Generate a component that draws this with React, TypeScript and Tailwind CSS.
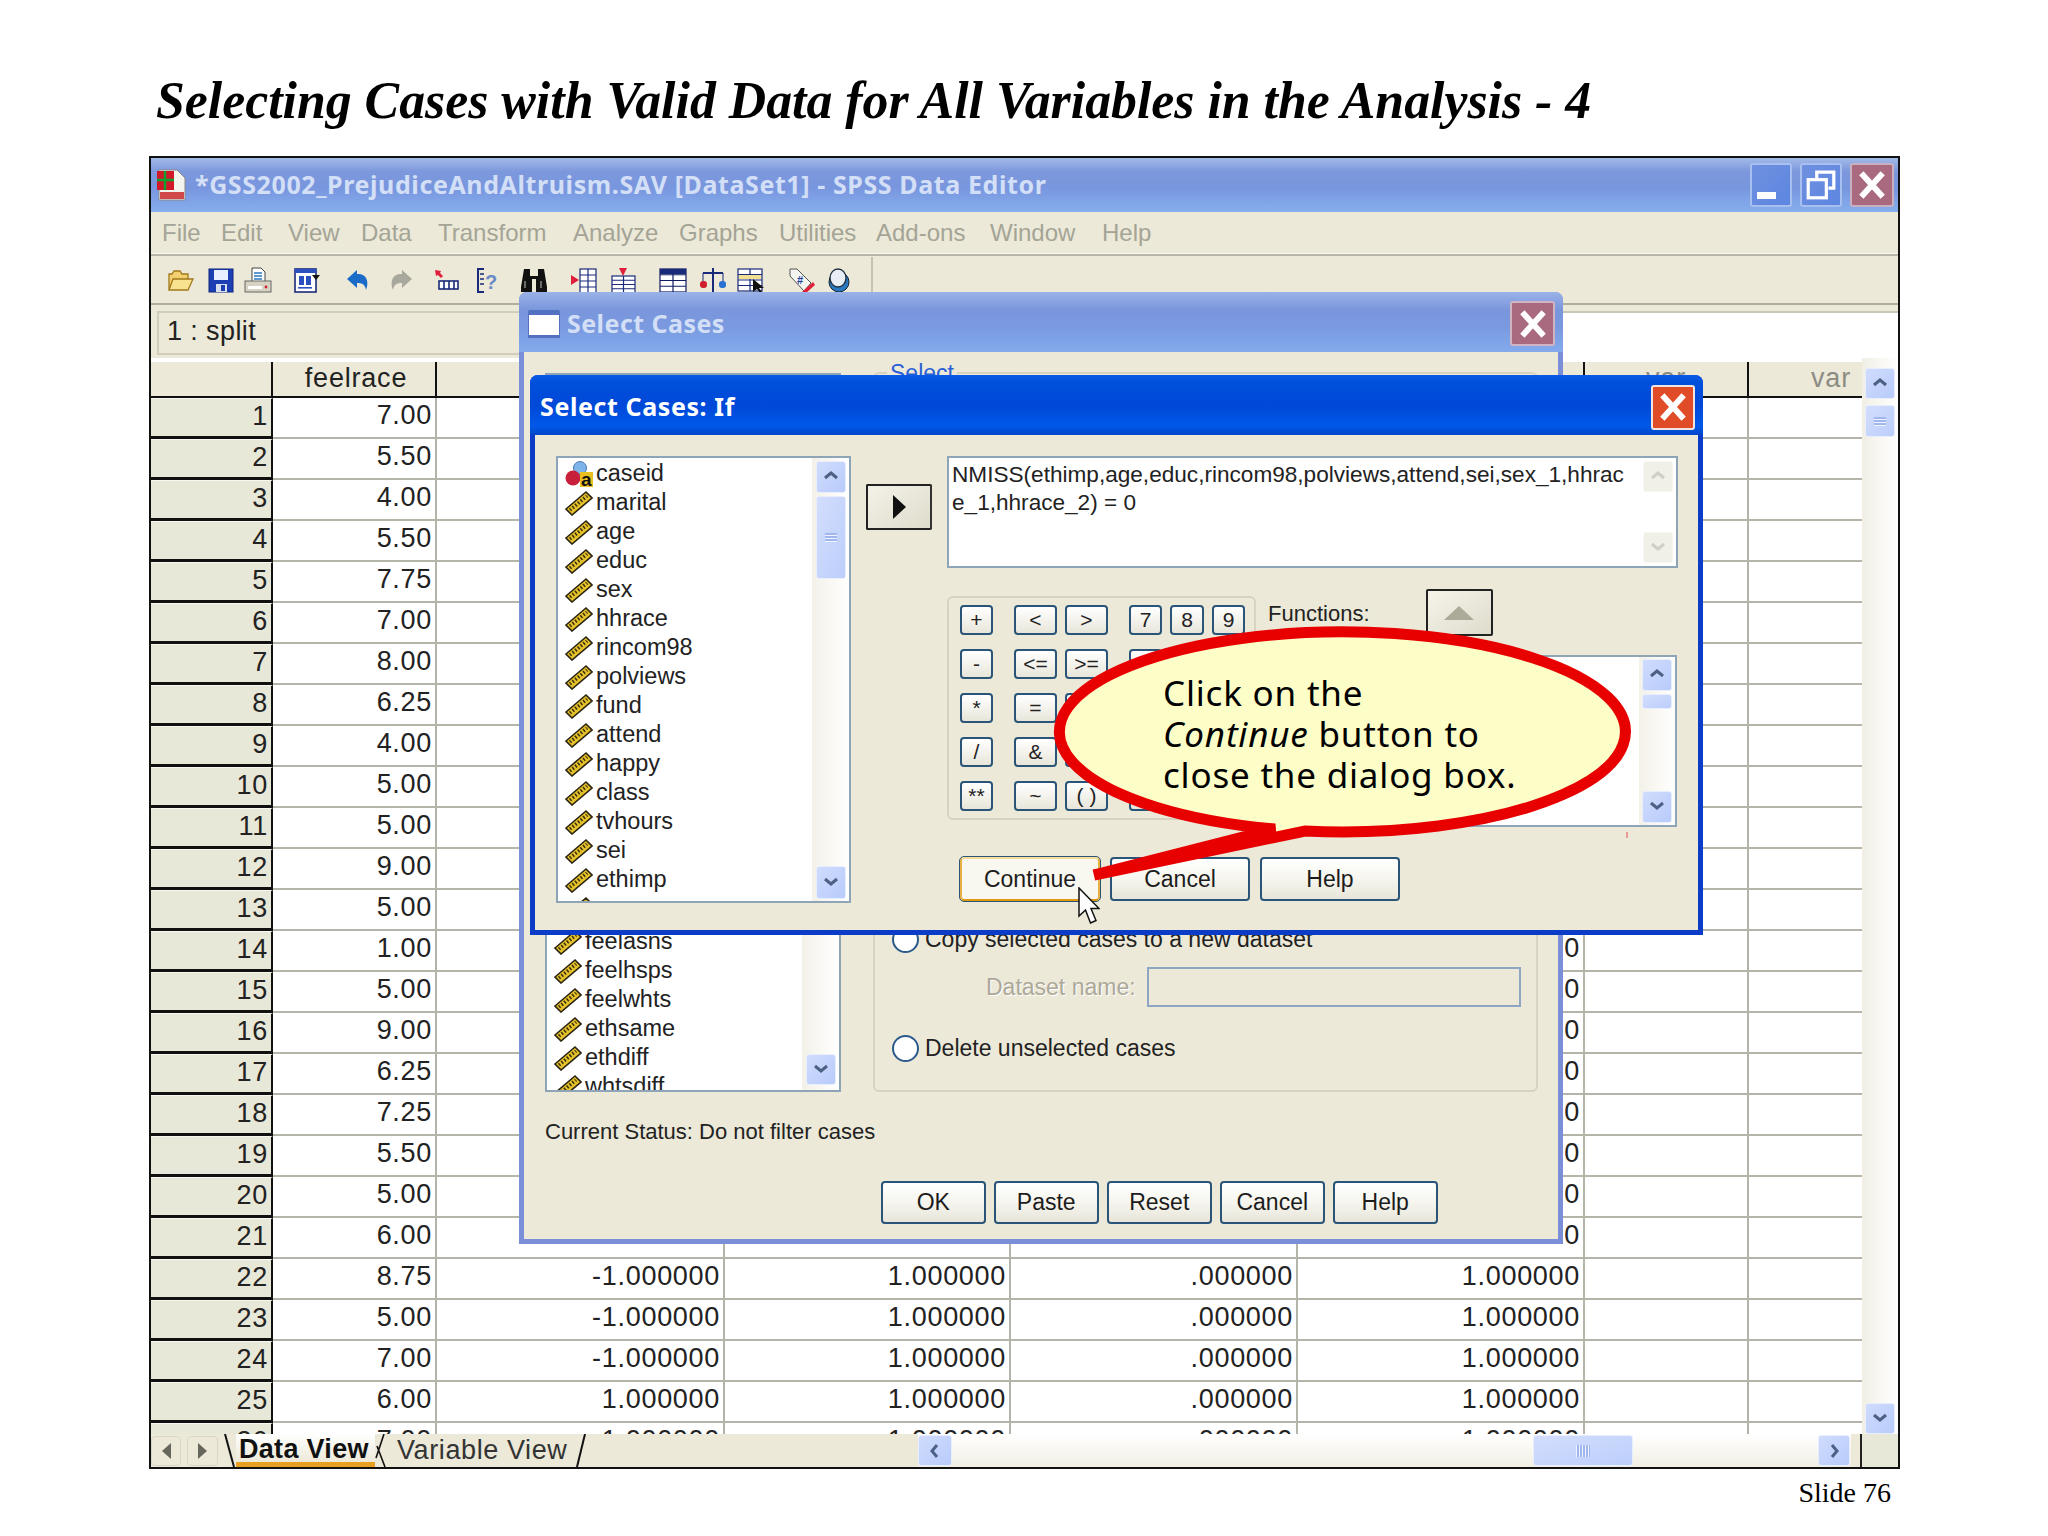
import React from 'react';

const sans = "font-['Liberation_Sans',Arial,sans-serif]";

const colWidths = ['w-[122px]', 'w-[164px]', 'w-[288px]', 'w-[286px]', 'w-[287px]', 'w-[287px]', 'w-[164px]', 'w-[164px]'];

const feelrace = [
  '7.00', '5.50', '4.00', '5.50', '7.75', '7.00', '8.00', '6.25', '4.00', '5.00', '5.00', '9.00', '5.00',
  '1.00', '5.00', '9.00', '6.25', '7.25', '5.50', '5.00', '6.00', '8.75', '5.00', '7.00', '6.00', '7.00',
];

const ifVars = [
  'marital', 'age', 'educ', 'sex', 'hhrace', 'rincom98', 'polviews', 'fund', 'attend', 'happy', 'class', 'tvhours', 'sei', 'ethimp',
];

const selectVars = ['feelasns', 'feelhsps', 'feelwhts', 'ethsame', 'ethdiff', 'whtsdiff'];

const menus = [
  { label: 'File', w: 'w-[59px]' },
  { label: 'Edit', w: 'w-[67px]' },
  { label: 'View', w: 'w-[73px]' },
  { label: 'Data', w: 'w-[77px]' },
  { label: 'Transform', w: 'w-[135px]' },
  { label: 'Analyze', w: 'w-[106px]' },
  { label: 'Graphs', w: 'w-[100px]' },
  { label: 'Utilities', w: 'w-[97px]' },
  { label: 'Add-ons', w: 'w-[114px]' },
  { label: 'Window', w: 'w-[112px]' },
  { label: 'Help', w: 'w-[60px]' },
];

const Ruler = () => (
  <svg viewBox="0 0 28 26" className="w-[28px] h-[26px] shrink-0">
    <polygon points="1,19 21,2 27,8 7,25" fill="#e6c22a" stroke="#2a2410" strokeWidth="1.6" />
    <line x1="5" y1="20" x2="22" y2="6" stroke="#3a3010" strokeWidth="3.5" strokeDasharray="1.5 2" />
  </svg>
);

const NominalIcon = () => (
  <svg viewBox="0 0 28 26" className="w-[28px] h-[26px] shrink-0">
    <circle cx="15" cy="7" r="6.5" fill="#7fb4e8" stroke="#4a7ab8" />
    <circle cx="8" cy="17" r="7.5" fill="#c8203a" />
    <rect x="15" y="11" width="13" height="15" fill="#e8c020" />
    <text x="16" y="24.5" fontSize="19" fontWeight="bold" fill="#111" fontFamily="Liberation Sans">a</text>
  </svg>
);

const Chevron = ({ dir, color = '#4d6185' }: { dir: 'up' | 'down' | 'left' | 'right'; color?: string }) => {
  const d = {
    up: 'M2 9l6-5 6 5',
    down: 'M2 4l6 5 6-5',
    left: 'M10 2L5 8l5 6',
    right: 'M6 2l5 6-5 6',
  }[dir];
  return (
    <svg viewBox="0 0 16 16" className="w-[16px] h-[16px]">
      <path d={d} fill="none" stroke={color} strokeWidth="3" />
    </svg>
  );
};

const ScrollBtn = ({ dir, className = '', disabled = false }: { dir: 'up' | 'down' | 'left' | 'right'; className?: string; disabled?: boolean }) => (
  <div
    className={
      'flex items-center justify-center rounded-[3px] border shrink-0 ' +
      (disabled ? 'bg-[#f1f0e8] border-[#f7f6f0] ' : 'bg-linear-to-br from-[#d0dcfd] to-[#b8cbfb] border-[#e8eefc] ') +
      className
    }
  >
    <Chevron dir={dir} color={disabled ? '#cfcfc6' : '#4d6185'} />
  </div>
);

const Thumb = ({ className = '', wide = false, plain = false }: { className?: string; wide?: boolean; plain?: boolean }) => (
  <div className={'flex items-center justify-center rounded-[3px] border border-[#e8eefc] bg-linear-to-br from-[#d3defd] to-[#bccefb] shrink-0 ' + className}>
    {plain ? null : wide ? (
      <div className="w-[14px] h-[12px] bg-[repeating-linear-gradient(90deg,#eef3ff_0px,#eef3ff_1px,#9fb6ee_1px,#9fb6ee_3px)]" />
    ) : (
      <div className="w-[12px] h-[9px] bg-[repeating-linear-gradient(0deg,#eef3ff_0px,#eef3ff_1px,#9fb6ee_1px,#9fb6ee_3px)]" />
    )}
  </div>
);

const XpButton = ({ label, className = '', focused = false }: { label: string; className?: string; focused?: boolean }) => (
  <div
    className={
      'flex items-center justify-center rounded-[4px] border-2 border-[#2a5578] text-[23px] text-[#1c1c1c] shrink-0 ' +
      (focused
        ? 'border-t-[#f6dc9a] border-b-[#e09a10] border-l-[#e8b040] border-r-[#e8b040] outline outline-[#2a5578] bg-[#f8f7f0] '
        : 'bg-linear-to-b from-white via-[#f6f5ee] to-[#e8e6da] ') +
      className
    }
  >
    {label}
  </div>
);

const PadKey = ({ label, className = '' }: { label: string; className?: string }) => (
  <div className={'flex items-center justify-center h-[30px] rounded-[4px] border-2 border-[#2a5578] bg-linear-to-b from-white to-[#e8e6da] text-[21px] text-[#222] shrink-0 ' + className}>
    {label}
  </div>
);

const CloseBtn = ({ className = '' }: { className?: string }) => (
  <div className={'flex items-center justify-center rounded-[3px] border-2 shrink-0 ' + className}>
    <svg viewBox="0 0 30 30" className="w-[32px] h-[32px]">
      <path d="M5 4L25 26M25 4L5 26" stroke="#fff" strokeWidth="5.5" />
    </svg>
  </div>
);

const Tool = ({ className = '', children }: { className?: string; children: React.ReactNode }) => (
  <svg viewBox="0 0 28 26" className={'w-[28px] h-[26px] shrink-0 ' + className}>
    {children}
  </svg>
);

const Grid3 = ({ x = 8, y = 3, w = 18, h = 21, color = '#1a2a7a' }: { x?: number; y?: number; w?: number; h?: number; color?: string }) => (
  <g stroke={color} fill="none" strokeWidth="1.2">
    <rect x={x} y={y} width={w} height={h} fill="#fff" />
    <path d={`M${x} ${y + h / 4}h${w}M${x} ${y + h / 2}h${w}M${x} ${y + (3 * h) / 4}h${w}M${x + w / 2} ${y}v${h}`} />
  </g>
);

const Toolbar = () => (
  <div className="h-[49px] shrink-0 flex items-center pl-[15px] border-b-2 border-[#b0ae9c]">
    <Tool>
      <path d="M3 22V7h3l2-3h6l2 3h6v5" fill="#f2d070" stroke="#a07818" strokeWidth="1.3" />
      <path d="M3 23l4-11h20l-5 11z" fill="#f8e290" stroke="#a07818" strokeWidth="1.3" />
    </Tool>
    <Tool className="ml-[13px]">
      <rect x="2" y="2" width="24" height="23" fill="#1c40b4" stroke="#0c2480" />
      <rect x="7" y="3" width="14" height="10" fill="#e8f0ff" />
      <rect x="9" y="17" width="11" height="8" fill="#d8e0f0" />
      <rect x="14" y="18" width="4" height="6" fill="#1c40b4" />
    </Tool>
    <Tool className="ml-[9px]">
      <path d="M8 1h9l4 4v10H8z" fill="#fff" stroke="#444" />
      <path d="M10 6h8M10 9h8M10 12h8" stroke="#2a7ac0" strokeWidth="1.6" />
      <rect x="1" y="14" width="26" height="11" fill="#d8d2c2" stroke="#666" />
      <rect x="4" y="19" width="14" height="3" fill="#fff" />
      <circle cx="22" cy="20" r="1.4" fill="#d02030" />
    </Tool>
    <Tool className="ml-[21px]">
      <rect x="2" y="2" width="21" height="23" fill="#fff" stroke="#1a2a7a" strokeWidth="1.6" />
      <rect x="2" y="2" width="21" height="4" fill="#2a50c0" />
      <rect x="6" y="9" width="5" height="9" fill="#2a50c0" />
      <rect x="13" y="9" width="5" height="9" fill="#2a50c0" />
      <rect x="5" y="20" width="14" height="1.6" fill="#2a50c0" />
      <path d="M19 8h8l-4 5z" fill="#111" />
    </Tool>
    <Tool className="ml-[24px]">
      <path d="M12 3L2 12l10 9v-5c5 0 8 1 9 7 4-10-1-17-9-16z" fill="#1a6cc8" />
    </Tool>
    <Tool className="ml-[13px]">
      <path d="M16 3l10 9-10 9v-5c-5 0-8 1-9 7-4-10 1-17 9-16z" fill="#a8a89c" />
    </Tool>
    <Tool className="ml-[18px]">
      <path d="M3 3l6 1-1 2 3 3-2 2-3-3-2 1z" fill="#e0203a" />
      <rect x="7" y="14" width="19" height="8" fill="#fff" stroke="#1a2a7a" strokeWidth="1.6" />
      <path d="M12 14v8M17 14v8M22 14v8" stroke="#1a2a7a" strokeWidth="1.6" />
    </Tool>
    <Tool className="ml-[16px]">
      <path d="M8 2H2v23h6" fill="none" stroke="#1a2a7a" strokeWidth="2" />
      <path d="M4 7h4M4 12h4M4 17h4" stroke="#1a2a7a" strokeWidth="1.4" />
      <text x="9" y="22" fontSize="20" fontWeight="bold" fill="#6a8ac8" fontFamily="Liberation Sans">?</text>
    </Tool>
    <Tool className="ml-[16px]">
      <path d="M4 2h6v7h8V2h6l3 18v5H16V12h-4v13H1v-5z" fill="#111" />
      <path d="M5 14v7M21 14v7" stroke="#888" strokeWidth="1.5" />
    </Tool>
    <Tool className="ml-[22px]">
      <Grid3 x={10} y={2} w={16} h={24} />
      <path d="M1 8l8 5-8 5z" fill="#e0203a" />
    </Tool>
    <Tool className="ml-[11px]">
      <Grid3 x={3} y={9} w={23} h={17} />
      <path d="M10 1h8l-4 8z" fill="#e0203a" />
    </Tool>
    <Tool className="ml-[22px]">
      <Grid3 x={1} y={2} w={26} h={23} color="#101c60" />
      <rect x="1" y="2" width="26" height="5" fill="#1a2a7a" />
    </Tool>
    <Tool className="ml-[12px]">
      <path d="M14 1v24M4 6h20" stroke="#1a2a7a" strokeWidth="2" />
      <path d="M4 6v8M24 6v8" stroke="#1a2a7a" />
      <rect x="1" y="14" width="7" height="7" rx="3" fill="#d02030" />
      <rect x="20" y="14" width="7" height="7" rx="3" fill="#2a70d0" />
    </Tool>
    <Tool className="ml-[10px]">
      <Grid3 x={1} y={2} w={24} h={22} />
      <rect x="2" y="8" width="22" height="4" fill="#f0e090" />
      <path d="M16 12v13l4-3 3 4 2-1-3-4h5z" fill="#111" />
    </Tool>
    <Tool className="ml-[23px]">
      <path d="M2 2h7l14 14-7 8L2 9z" fill="#f4f4f0" stroke="#555" />
      <text x="9" y="17" fontSize="11" fontWeight="bold" fill="#2040a0" fontFamily="Liberation Sans">#</text>
      <path d="M14 25l11-10 2 3-10 9z" fill="#e0203a" />
    </Tool>
    <Tool className="ml-[10px]">
      <circle cx="13" cy="15" r="10" fill="#2a78c0" stroke="#123" />
      <ellipse cx="12" cy="11" rx="8" ry="9" fill="#e8eef4" stroke="#234" strokeWidth="1.4" />
    </Tool>
    <div className="ml-[17px] w-[2px] h-[46px] bg-[#c4c2b0]" />
  </div>
);

const DataGrid = () => (
  <div className="h-[1076px] w-[1711px] shrink-0 overflow-hidden bg-white pt-[4px] flex flex-col">
    <div className="flex h-[36px] shrink-0 bg-[#ece9d8] border-b-2 border-[#111] text-[27px] tracking-[0.8px] text-[#222]">
      <div className={colWidths[0] + ' shrink-0 border-r-2 border-[#111]'} />
      <div className={colWidths[1] + ' shrink-0 border-r-2 border-[#111] flex items-center justify-center pb-[2px] pl-[4px]'}>feelrace</div>
      {colWidths.slice(2, 6).map((w) => (
        <div key={w + 'h'} className={w + ' shrink-0 border-r-2 border-[#111]'} />
      ))}
      <div className={colWidths[6] + ' shrink-0 border-r-2 border-[#111] flex items-center justify-center pb-[2px] text-[#8c8c84]'}>var</div>
      <div className={colWidths[7] + ' shrink-0 flex items-center justify-center pb-[2px] text-[#8c8c84]'}>var</div>
    </div>
    {feelrace.map((v, i) => {
      const row = i + 1;
      const late = row >= 22;
      const c2 = row === 25 || row === 26 ? '1.000000' : '-1.000000';
      return (
        <div key={row} className="flex h-[41px] shrink-0 text-[27px] tracking-[0.7px] text-[#222] leading-[35px]">
          <div className={colWidths[0] + ' shrink-0 bg-[#e8e8d8] border-t border-[#f8f8f0] border-r-2 border-b-[3px] border-r-[#111] border-b-[#111] text-right pr-[3px]'}>{row}</div>
          <div className={colWidths[1] + ' shrink-0 border-r-2 border-b-2 border-[#b4b4a8] text-right pr-[3px]'}>{v}</div>
          <div className={colWidths[2] + ' shrink-0 border-r-2 border-b-2 border-[#b4b4a8] text-right pr-[3px]'}>{late ? c2 : ''}</div>
          <div className={colWidths[3] + ' shrink-0 border-r-2 border-b-2 border-[#b4b4a8] text-right pr-[3px]'}>{late ? '1.000000' : ''}</div>
          <div className={colWidths[4] + ' shrink-0 border-r-2 border-b-2 border-[#b4b4a8] text-right pr-[3px]'}>{late ? '.000000' : ''}</div>
          {/* the upper rows only show their last digit past the dialog */}
          <div className={colWidths[5] + ' shrink-0 border-r-2 border-b-2 border-[#b4b4a8] text-right pr-[3px]'}>{late ? '1.000000' : '0'}</div>
          <div className={colWidths[6] + ' shrink-0 border-r-2 border-b-2 border-[#b4b4a8]'} />
          <div className={colWidths[7] + ' shrink-0 border-b-2 border-[#b4b4a8]'} />
        </div>
      );
    })}
  </div>
);

const BottomBar = () => (
  <div className="h-[33px] shrink-0 flex bg-[#ece9d8]">
    <div className="w-[767px] shrink-0 flex items-center">
      <div className="w-[30px] h-[30px] rounded-[4px] border border-[#d8d6c6] flex items-center justify-center">
        <div className="border-y-[8px] border-y-transparent border-r-[9px] border-r-[#66665c]" />
      </div>
      <div className="ml-[6px] w-[31px] h-[30px] rounded-[4px] border border-[#d8d6c6] flex items-center justify-center">
        <div className="border-y-[8px] border-y-transparent border-l-[9px] border-l-[#66665c]" />
      </div>
      <svg viewBox="0 0 14 33" className="ml-[6px] w-[14px] h-[33px] shrink-0">
        <path d="M1 0l9 33" stroke="#111" strokeWidth="2" />
      </svg>
      <div className="h-[33px] w-[139px] shrink-0 -ml-[2px] pl-[3px] border-b-[5px] border-[#e8a020] text-[27px] tracking-[0.3px] font-bold leading-[31px] text-[#111] bg-linear-to-b from-white to-[#ece9d8]">Data View</div>
      <svg viewBox="0 0 16 33" className="w-[16px] h-[33px] shrink-0">
        <path d="M9 0L1 24M2 12l8 21" stroke="#111" strokeWidth="1.6" fill="none" />
      </svg>
      <div className="ml-[6px] text-[27px] tracking-[0.6px] leading-[33px] text-[#333] shrink-0">Variable View</div>
      <svg viewBox="0 0 12 33" className="ml-[8px] w-[12px] h-[33px] shrink-0">
        <path d="M10 0L2 33" stroke="#111" strokeWidth="2" />
      </svg>
    </div>
    <div className="w-[933px] shrink-0 flex items-center bg-linear-to-b from-white to-[#f1efe4]">
      <ScrollBtn dir="left" className="w-[34px] h-[31px]" />
      <div className="ml-[581px]">
        <Thumb wide className="w-[100px] h-[31px]" />
      </div>
      <ScrollBtn dir="right" className="ml-[185px] w-[32px] h-[31px]" />
    </div>
    <div className="w-[11px] shrink-0 border-r-2 border-[#222] bg-[#ece9d8]" />
    <div className="flex-1 bg-[#e8e8d8]" />
  </div>
);

const MainWindow = () => (
  <div className="ml-[149px] w-[1751px] h-[1313px] border-2 border-[#111] bg-[#ece9d8] flex flex-col">
    <div className="h-[54px] shrink-0 flex items-center bg-[linear-gradient(180deg,#a2bae8_0%,#7d98dc_25%,#7896de_55%,#86aeee_100%)]">
      <svg viewBox="0 0 30 32" className="ml-[5px] w-[30px] h-[32px] shrink-0">
        <path d="M3 1h18l8 8v22H3z" fill="#f4f4ee" stroke="#888" />
        <rect x="1" y="2" width="17" height="19" fill="#d01828" />
        <path d="M9 2v19M1 11h17" stroke="#10a030" strokeWidth="2.5" />
        <rect x="4" y="23" width="24" height="7" fill="#d04848" />
      </svg>
      <div className="ml-[9px] text-[25px] font-bold tracking-[0.6px] text-[#d3dff6] font-['Noto_Sans',sans-serif] whitespace-nowrap">
        *GSS2002_PrejudiceAndAltruism.SAV [DataSet1] - SPSS Data Editor
      </div>
      <div className="ml-auto mr-[4px] flex gap-[8px]">
        <div className="w-[42px] h-[44px] rounded-[3px] border-2 border-[#a8c0f0] bg-linear-to-br from-[#7090e0] to-[#5c86e0] flex items-end pl-[5px] pb-[6px]">
          <div className="w-[19px] h-[7px] bg-white" />
        </div>
        <div className="w-[42px] h-[44px] rounded-[3px] border-2 border-[#a8c0f0] bg-linear-to-br from-[#7090e0] to-[#5c86e0] flex items-center justify-center">
          <svg viewBox="0 0 30 30" className="w-[32px] h-[32px]">
            <path d="M11 9V3h16v15h-5" fill="none" stroke="#fff" strokeWidth="3" />
            <rect x="3" y="10" width="17" height="17" fill="none" stroke="#fff" strokeWidth="3" />
          </svg>
        </div>
        <CloseBtn className="w-[44px] h-[44px] border-[#c8b0c0] bg-[#a96a80]" />
      </div>
    </div>
    <div className="h-[41px] shrink-0 flex items-center pl-[11px] text-[24px] text-[#a4a496]">
      {menus.map((m) => (
        <span key={m.label} className={m.w + ' shrink-0'}>{m.label}</span>
      ))}
    </div>
    <div className="h-[3px] shrink-0 bg-[#b8b6a6] border-t border-[#f8f7f0]" />
    <Toolbar />
    <div className="h-[53px] shrink-0 flex flex-col">
      <div className="h-[6px] shrink-0" />
      <div className="flex-1 flex">
        <div className="ml-[6px] w-[500px] h-[44px] border-2 border-[#cfcdbb] flex items-center pl-[8px] pb-[3px] text-[27px] tracking-[0.4px] text-[#222]">1 : split</div>
        <div className="flex-1 bg-white border-t-2 border-[#c8c6b6]" />
      </div>
    </div>
    <div className="flex">
      <DataGrid />
      <div className="w-[36px] h-[1076px] shrink-0 pt-[10px] flex flex-col items-center bg-linear-to-r from-[#f1efe4] to-white">
        <ScrollBtn dir="up" className="w-[30px] h-[31px]" />
        <Thumb className="mt-[6px] w-[30px] h-[32px]" />
        <ScrollBtn dir="down" className="mt-auto w-[30px] h-[31px]" />
      </div>
    </div>
    <BottomBar />
  </div>
);

const SelectCasesDialog = () => (
  <div className="absolute left-[519px] top-[292px] w-[1044px] h-[952px] rounded-t-[8px] border-x-[5px] border-b-[5px] border-[#7b8ed8] bg-[#ece9d8] flex flex-col">
    <div className="-mx-[5px] h-[60px] shrink-0 rounded-t-[8px] flex items-center pt-[3px] bg-[linear-gradient(180deg,#9ab2e8_0%,#7a96dc_30%,#7a9ae0_60%,#84aaec_100%)]">
      <div className="ml-[9px] w-[32px] h-[28px] rounded-t-[2px] bg-white border-t-[5px] border-x border-b-[3px] border-x-[#5470c0] border-t-[#5470c0] border-b-[#5470c0]" />
      <div className="ml-[7px] text-[25px] font-bold tracking-[0.45px] text-[#d3dff6] font-['Noto_Sans',sans-serif]">Select Cases</div>
      <CloseBtn className="ml-auto mr-[8px] w-[45px] h-[45px] border-[#d0b4c4] bg-[#a96a80]" />
    </div>
    <div className="flex pt-[21px] pl-[21px]">
      <div className="w-[296px] h-[719px] shrink-0 border-2 border-[#8ea5b8] bg-white flex overflow-hidden">
        <div className="flex-1 flex flex-col justify-end pl-[7px] -mb-[11px]">
          {selectVars.map((v) => (
            <div key={v} className="h-[29px] shrink-0 flex items-center gap-[3px] text-[23.5px] text-[#222]">
              <Ruler />
              {v}
            </div>
          ))}
        </div>
        <div className="w-[37px] shrink-0 flex flex-col justify-end items-center pb-[5px] bg-linear-to-r from-[#f3f1e8] to-white">
          <ScrollBtn dir="down" className="w-[30px] h-[31px]" />
        </div>
      </div>
      <div className="relative ml-[32px] w-[665px] h-[720px] shrink-0 -mt-px rounded-[6px] border-2 border-[#d6d3c0] flex flex-col justify-end pb-[28px] pl-[17px] text-[23px] text-[#222]">
        <div className="absolute left-[12px] -top-[14px] px-[3px] text-[23px] leading-[26px] text-[#2a5fd8] bg-[#ece9d8]">Select</div>
        <div className="h-[27px] flex items-center gap-[6px]">
          <div className="w-[27px] h-[27px] rounded-full border-2 border-[#2a5a8c] bg-white shrink-0" />
          Copy selected cases to a new dataset
        </div>
        <div className="mt-[14px] h-[40px] flex items-center gap-[11px] pl-[94px]">
          <span className="text-[#aca899] [text-shadow:1px_1px_0_#fff]">Dataset name:</span>
          <div className="w-[374px] h-[40px] border-2 border-[#8ea5c4]" />
        </div>
        <div className="mt-[27px] h-[28px] flex items-center gap-[6px]">
          <div className="w-[27px] h-[27px] rounded-full border-2 border-[#2a5a8c] bg-white shrink-0" />
          Delete unselected cases
        </div>
      </div>
    </div>
    <div className="ml-[21px] mt-[24px] h-[30px] flex items-center text-[22px] text-[#222]">Current Status: Do not filter cases</div>
    <div className="ml-[357px] mt-[35px] flex gap-[8.5px]">
      {['OK', 'Paste', 'Reset', 'Cancel', 'Help'].map((b) => (
        <XpButton key={b} label={b} className="w-[104.5px] h-[43px]" />
      ))}
    </div>
  </div>
);

const padRows = [
  ['+', '<', '>', '7', '8', '9'],
  ['-', '<=', '>=', '4', '5', '6'],
  ['*', '=', '~=', '1', '2', '3'],
  ['/', '&', '|', '0', '.', ''],
  ['**', '~', '( )', 'Delete', '', ''],
];

const CalcPad = () => (
  <div className="w-[309px] h-[224px] shrink-0 rounded-[6px] border-2 border-[#d6d3c0] pl-[11px] pt-[7px] flex flex-col gap-[14px]">
    {padRows.map((r, i) => (
      <div key={i} className="flex">
        <PadKey label={r[0]} className="w-[33px]" />
        <PadKey label={r[1]} className="ml-[21px] w-[43px]" />
        <PadKey label={r[2]} className="ml-[8px] w-[43px]" />
        {r[3] === 'Delete' ? (
          <PadKey label="Delete" className="ml-[21px] w-[116px]" />
        ) : (
          <>
            <PadKey label={r[3]} className="ml-[21px] w-[33px]" />
            {r[4] && <PadKey label={r[4]} className="ml-[8px] w-[34px]" />}
            {r[5] && <PadKey label={r[5]} className="ml-[8px] w-[33px]" />}
          </>
        )}
      </div>
    ))}
  </div>
);

const IfDialog = () => (
  <div className="absolute left-[530px] top-[375px] w-[1173px] h-[560px] rounded-t-[8px] border-x-[5px] border-b-[5px] border-[#0a3cc8] bg-[#ece9d8] flex flex-col">
    <div className="-mx-[5px] h-[60px] shrink-0 rounded-t-[8px] flex items-center pt-[4px] bg-[linear-gradient(180deg,#0a5ae8_0%,#0050dc_12%,#0048d8_50%,#0058e8_85%,#0046c8_100%)]">
      <div className="ml-[10px] text-[25px] font-bold tracking-[0.6px] text-white font-['Noto_Sans',sans-serif]">Select Cases: If</div>
      <CloseBtn className="ml-auto mr-[8px] w-[44px] h-[45px] border-[#f0e4e0] bg-[#e04c28]" />
    </div>
    <div className="flex pl-[21px] pt-[21px]">
      <div className="w-[295px] h-[447px] shrink-0 border-2 border-[#8ea5b8] bg-white flex overflow-hidden">
        <div className="flex-1 pl-[7px] pt-[1px] flex flex-col">
          <div className="h-[29px] shrink-0 flex items-center gap-[3px] text-[23.5px] text-[#222]">
            <NominalIcon />
            caseid
          </div>
          {ifVars.map((v) => (
            <div key={v} className="h-[29px] shrink-0 flex items-center gap-[3px] text-[23.5px] text-[#222]">
              <Ruler />
              {v}
            </div>
          ))}
          <div className="h-[29px] shrink-0 flex items-center">
            <Ruler />
          </div>
        </div>
        <div className="w-[37px] shrink-0 flex flex-col items-center pt-[3px] pb-[2px] bg-linear-to-r from-[#f3f1e8] to-white">
          <ScrollBtn dir="up" className="w-[30px] h-[32px]" />
          <Thumb className="mt-[3px] w-[30px] h-[83px]" />
          <ScrollBtn dir="down" className="mt-auto w-[30px] h-[33px]" />
        </div>
      </div>
      <div className="ml-[15px] mt-[28px] w-[66px] h-[46px] shrink-0 rounded-[2px] border-2 border-[#222] border-r-[#333] bg-linear-to-br from-[#f4f2e8] to-[#dedccc] flex items-center justify-center">
        <div className="border-y-[12px] border-y-transparent border-l-[13px] border-l-[#111]" />
      </div>
      <div className="ml-[15px] w-[731px] shrink-0 flex flex-col">
        <div className="h-[112px] shrink-0 border-2 border-[#8ea5b8] bg-white flex">
          <div className="flex-1 pl-[3px] pt-[3px] text-[22.6px] leading-[28px] text-[#222] break-all">
            NMISS(ethimp,age,educ,rincom98,polviews,attend,sei,sex_1,hhrac
            <br />
            e_1,hhrace_2) = 0
          </div>
          <div className="w-[36px] shrink-0 flex flex-col items-center py-[3px]">
            <ScrollBtn dir="up" disabled className="w-[30px] h-[31px]" />
            <ScrollBtn dir="down" disabled className="mt-auto w-[30px] h-[31px]" />
          </div>
        </div>
        <div className="mt-[28px] flex">
          <CalcPad />
          <div className="ml-[10px] -mt-[7px] w-[411px] shrink-0 flex flex-col">
            <div className="h-[47px] flex items-start">
              <div className="ml-[2px] mt-[8px] text-[22px] text-[#222]">Functions:</div>
              <div className="ml-[56px] w-[67px] h-[47px] rounded-[2px] border-2 border-[#222] bg-linear-to-br from-[#f6f4ea] to-[#dedccc] flex items-center justify-center">
                <div className="border-x-[15px] border-x-transparent border-b-[14px] border-b-[#acaa98]" />
              </div>
            </div>
            <div className="mt-[19px] ml-[2px] h-[172px] border-2 border-[#8ea5b8] bg-white flex justify-end">
              <div className="w-[36px] shrink-0 flex flex-col items-center py-[2px] bg-linear-to-r from-[#f3f1e8] to-white">
                <ScrollBtn dir="up" className="w-[30px] h-[32px]" />
                <Thumb plain className="mt-[3px] w-[30px] h-[15px]" />
                <ScrollBtn dir="down" className="mt-auto w-[30px] h-[32px]" />
              </div>
            </div>
          </div>
        </div>
        <div className="mt-[30px] ml-[13px] flex gap-[10px]">
          <XpButton label="Continue" focused className="w-[140px] h-[44px]" />
          <XpButton label="Cancel" className="w-[140px] h-[44px]" />
          <XpButton label="Help" className="w-[140px] h-[44px]" />
        </div>
      </div>
    </div>
  </div>
);

const Balloon = () => (
  <>
    <svg viewBox="1040 615 610 270" className="absolute left-[1040px] top-[615px] w-[610px] h-[270px]">
      <path
        d="M1275 829L1094 875L1305 831A283 100 0 1 0 1275 829Z"
        fill="#fdfdc8"
        stroke="#e80000"
        strokeWidth="11"
        strokeLinejoin="miter"
      />
      <line x1="1627" y1="832" x2="1627" y2="838" stroke="#e88080" strokeWidth="1.5" />
    </svg>
    <div className="absolute left-[1163px] top-[672px] text-[35px] tracking-[0.8px] leading-[41px] text-black font-['Noto_Sans',sans-serif] whitespace-nowrap">
      Click on the
      <br />
      <i>Continue</i> button to
      <br />
      close the dialog box.
    </div>
    <svg viewBox="0 0 22 37" className="absolute left-[1078px] top-[887px] w-[22px] h-[37px]">
      <path d="M1 1V29L7.5 23L12.5 36L18 33.5L13 21.5H21Z" fill="#fff" stroke="#111" strokeWidth="1.5" />
    </svg>
  </>
);

export default function App() {
  return (
    <div className={'relative w-[2048px] h-[1536px] overflow-hidden bg-white ' + sans}>
      <div className="h-[156px] pl-[156px] pt-[66px] font-['Liberation_Serif',serif] font-bold italic text-[51.8px] leading-[70px] text-black whitespace-nowrap">
        Selecting Cases with Valid Data for All Variables in the Analysis - 4
      </div>
      <MainWindow />
      <div className="mt-[8px] w-[1891px] text-right font-['Liberation_Serif',serif] text-[28px] leading-[32px] text-black">Slide 76</div>
      <SelectCasesDialog />
      <IfDialog />
      <Balloon />
    </div>
  );
}
